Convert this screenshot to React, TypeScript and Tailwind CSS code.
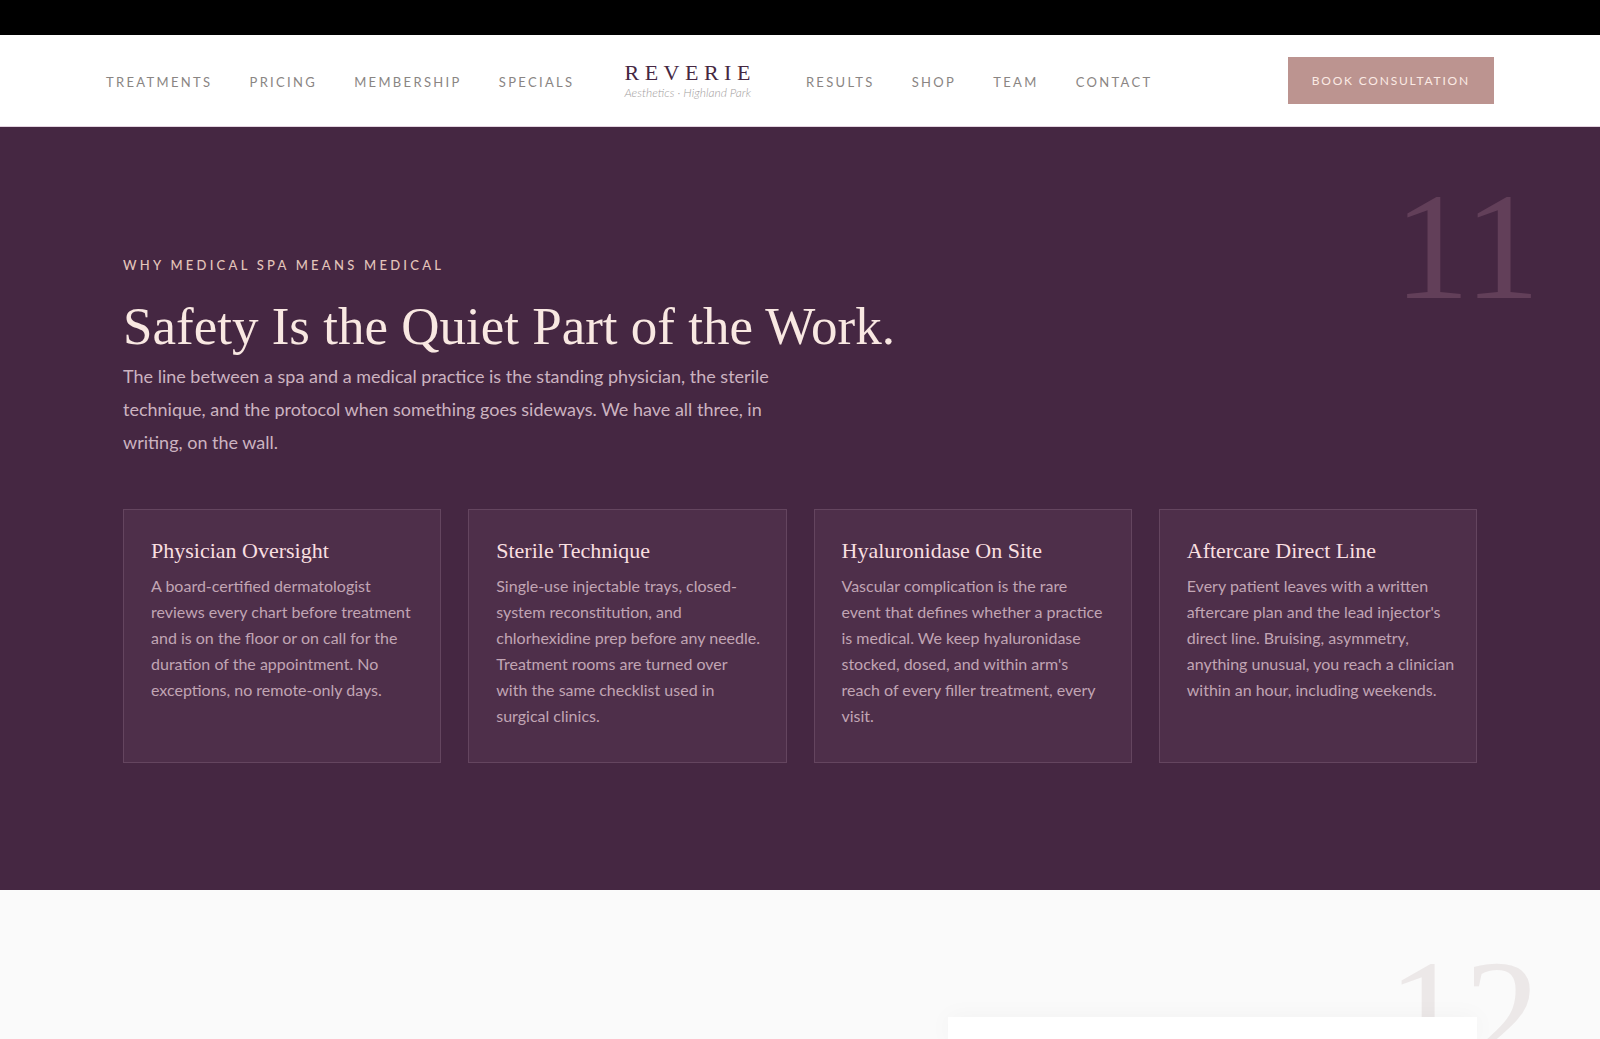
import React from 'react';

const LEFT_LINKS = ['Treatments', 'Pricing', 'Membership', 'Specials'];
const RIGHT_LINKS = ['Results', 'Shop', 'Team', 'Contact'];

const STANDARDS = [
  {
    title: 'Physician Oversight',
    text: 'A board-certified dermatologist\nreviews every chart before treatment\nand is on the floor or on call for the\nduration of the appointment. No\nexceptions, no remote-only days.',
  },
  {
    title: 'Sterile Technique',
    text: 'Single-use injectable trays, closed-\nsystem reconstitution, and\nchlorhexidine prep before any needle.\nTreatment rooms are turned over\nwith the same checklist used in\nsurgical clinics.',
  },
  {
    title: 'Hyaluronidase On Site',
    text: "Vascular complication is the rare\nevent that defines whether a practice\nis medical. We keep hyaluronidase\nstocked, dosed, and within arm's\nreach of every filler treatment, every\nvisit.",
  },
  {
    title: 'Aftercare Direct Line',
    text: "Every patient leaves with a written\naftercare plan and the lead injector's\ndirect line. Bruising, asymmetry,\nanything unusual, you reach a clinician\nwithin an hour, including weekends.",
  },
];

function NavLinks({ links }: { links: string[] }) {
  return (
    <ul className="flex items-center gap-[37px]">
      {links.map((link) => (
        <li key={link}>
          <a href="#" className="block pt-0.5 text-[13px] leading-5 tracking-[0.18em] uppercase text-[#8a8583] hover:text-[#452742]">
            {link}
          </a>
        </li>
      ))}
    </ul>
  );
}

function SectionNumber({ value, className }: { value: string; className: string }) {
  return (
    <span
      aria-hidden="true"
      className={`absolute right-[60px] font-['Liberation_Serif',serif] text-[152px] leading-none select-none ${className}`}
    >
      {value}
    </span>
  );
}

export default function App() {
  return (
    <div className="min-h-screen flex flex-col bg-white font-['Lato',sans-serif]">
      <div className="h-[35px] bg-black" />

      <header className="h-[92px] px-[106px] flex items-center justify-between border-b border-[#e3d3e0]">
        <nav className="flex items-center gap-[50px]" aria-label="Main">
          <NavLinks links={LEFT_LINKS} />
          <a href="#" className="flex flex-col">
            <span className="font-['Liberation_Serif',serif] text-[22px] leading-6 tracking-[0.25em] text-[#452742]">REVERIE</span>
            <span className="text-xs leading-4 font-light italic whitespace-nowrap text-[#a39e9e]">Aesthetics · Highland Park</span>
          </a>
          <NavLinks links={RIGHT_LINKS} />
        </nav>
        <button
          type="button"
          className="h-[47px] px-6 bg-[#bc9490] text-[#fbeae4] text-xs tracking-[0.15em] uppercase whitespace-nowrap hover:bg-[#ad8480]"
        >
          Book Consultation
        </button>
      </header>

      {/* Safety standards */}
      <section className="relative px-[123px] py-[127px] bg-[#452742]">
        <SectionNumber value="11" className="top-11 text-[#623f59]" />
        <p className="text-[13px] leading-[22px] font-medium tracking-[0.25em] uppercase text-[#e3c4ba]">
          Why Medical Spa Means Medical
        </p>
        <h1 className="mt-5 font-['Liberation_Serif',serif] text-[53px] leading-[60px] text-[#f9e8e2]">
          Safety Is the Quiet Part of the Work.
        </h1>
        <p className="mt-1 max-w-[660px] text-lg leading-[33px] text-[#ccb3c0]">
          The line between a spa and a medical practice is the standing physician, the sterile technique, and the protocol when
          something goes sideways. We have all three, in writing, on the wall.
        </p>

        <div className="mt-[50px] grid grid-cols-4 gap-[27px]">
          {STANDARDS.map((item) => (
            <article key={item.title} className="pl-[27px] pr-4 pt-[27px] pb-[33px] border border-[#64455f] bg-[#4e2f4a]">
              <h2 className="font-['Liberation_Serif',serif] text-[22px] leading-7 text-[#f9dfe0]">{item.title}</h2>
              <p className="mt-2 text-base leading-[26px] whitespace-pre-line text-[#c1a5b4]">{item.text}</p>
            </article>
          ))}
        </div>
      </section>

      {/* Next section, panel on the right */}
      <section className="relative flex-1 flex flex-col items-end overflow-hidden px-[123px] pt-[127px] bg-[#fafafa]">
        <SectionNumber value="12" className="top-12 text-[#ece8e8]" />
        <div className="relative flex-1 w-[529px] bg-white shadow-[0_0_24px_rgba(0,0,0,0.04)]" />
      </section>
    </div>
  );
}
